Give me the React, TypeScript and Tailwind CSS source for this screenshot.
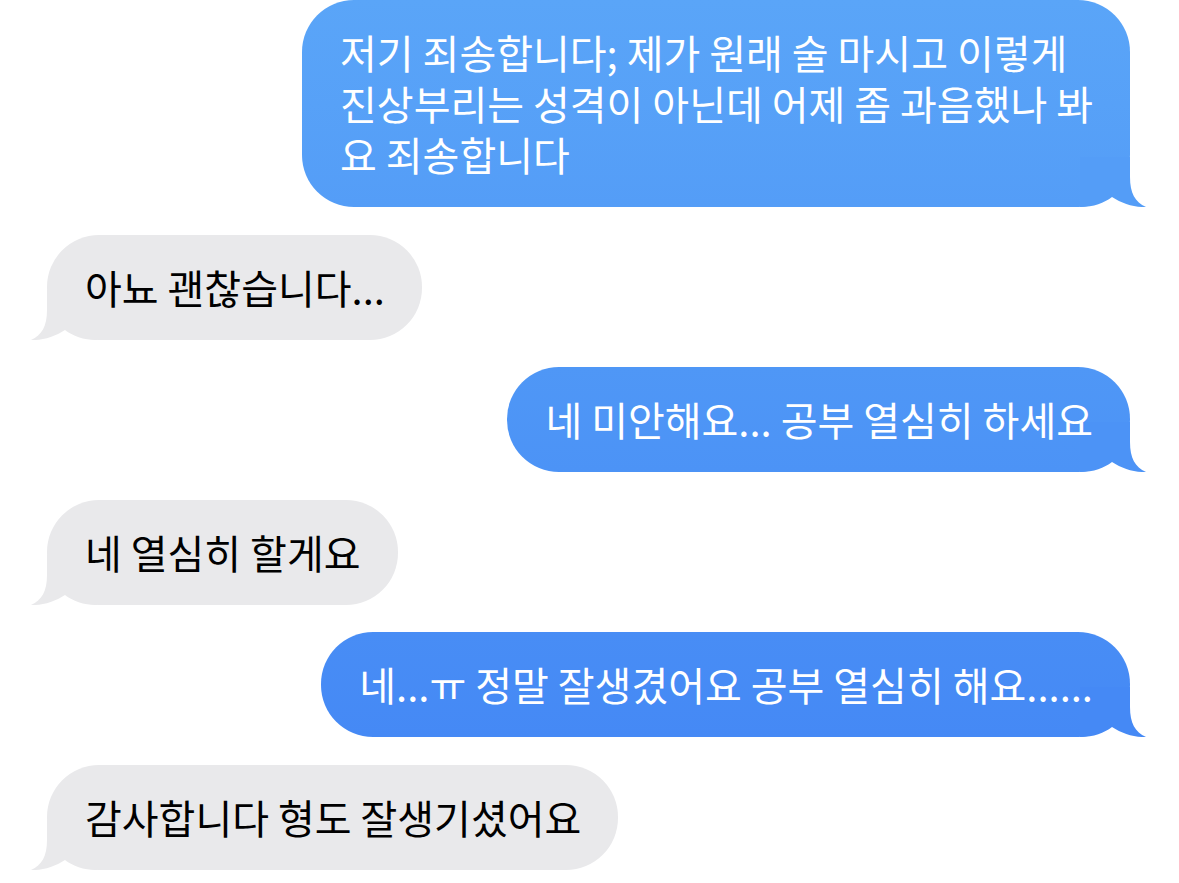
import React from 'react';

type Msg = { side: 'me' | 'them'; lines: string[]; from?: string; to?: string };

const messages: Msg[] = [
    { side: 'me', lines: ['저기 죄송합니다; 제가 원래 술 마시고 이렇게', '진상부리는 성격이 아닌데 어제 좀 과음했나 봐', '요 죄송합니다'], from: '#5aa5f8', to: '#549df7' },
    { side: 'them', lines: ['아뇨 괜찮습니다...'] },
    { side: 'me', lines: ['네 미안해요... 공부 열심히 하세요'], from: '#4f97f6', to: '#4c93f6' },
    { side: 'them', lines: ['네 열심히 할게요'] },
    { side: 'me', lines: ['네...ㅠ 정말 잘생겼어요 공부 열심히 해요......'], from: '#488df5', to: '#4589f5' },
    { side: 'them', lines: ['감사합니다 형도 잘생기셨어요'] },
];

// bubble tail, drawn for the right side; mirrored for the left
const Tail: React.FC<{ color: string; left?: boolean }> = ({ color, left }) => (
    <svg
        viewBox="0 0 66 50"
        className={`absolute bottom-0 w-[66px] h-[50px] ${left ? 'left-[-16px] -scale-x-100' : 'right-[-16px]'}`}
    >
        <path d="M0 0H50V20C50 36 55 45 66 50C54 50.5 42 46.5 32 40C24 46 14 50 0 50Z" fill={color} />
    </svg>
);

const Bubble: React.FC<{ m: Msg }> = ({ m }) => {
    const me = m.side === 'me';
    return (
        <div
            className={`relative rounded-[52px] py-[27px] pl-[38px] pr-[37px] text-[40px] leading-[51px] whitespace-nowrap ${
                me ? 'self-end mr-[49px] text-white' : 'self-start ml-[47px] bg-[#e9e9eb] text-black'
            }`}
            style={me ? { backgroundImage: `linear-gradient(to bottom, ${m.from}, ${m.to})` } : undefined}
        >
            <Tail color={me ? m.to! : '#e9e9eb'} left={!me} />
            <div className="relative">
                {m.lines.map((l, i) => (
                    <div key={i}>{l}</div>
                ))}
            </div>
        </div>
    );
};

export default function App() {
    return (
        <div className="w-[1179px] h-[883px] bg-white overflow-hidden font-['Noto_Sans_CJK_KR','Noto_Sans',sans-serif]">
            <div className="flex flex-col gap-[27.5px]">
                {messages.map((m, i) => (
                    <Bubble key={i} m={m} />
                ))}
            </div>
        </div>
    );
}
